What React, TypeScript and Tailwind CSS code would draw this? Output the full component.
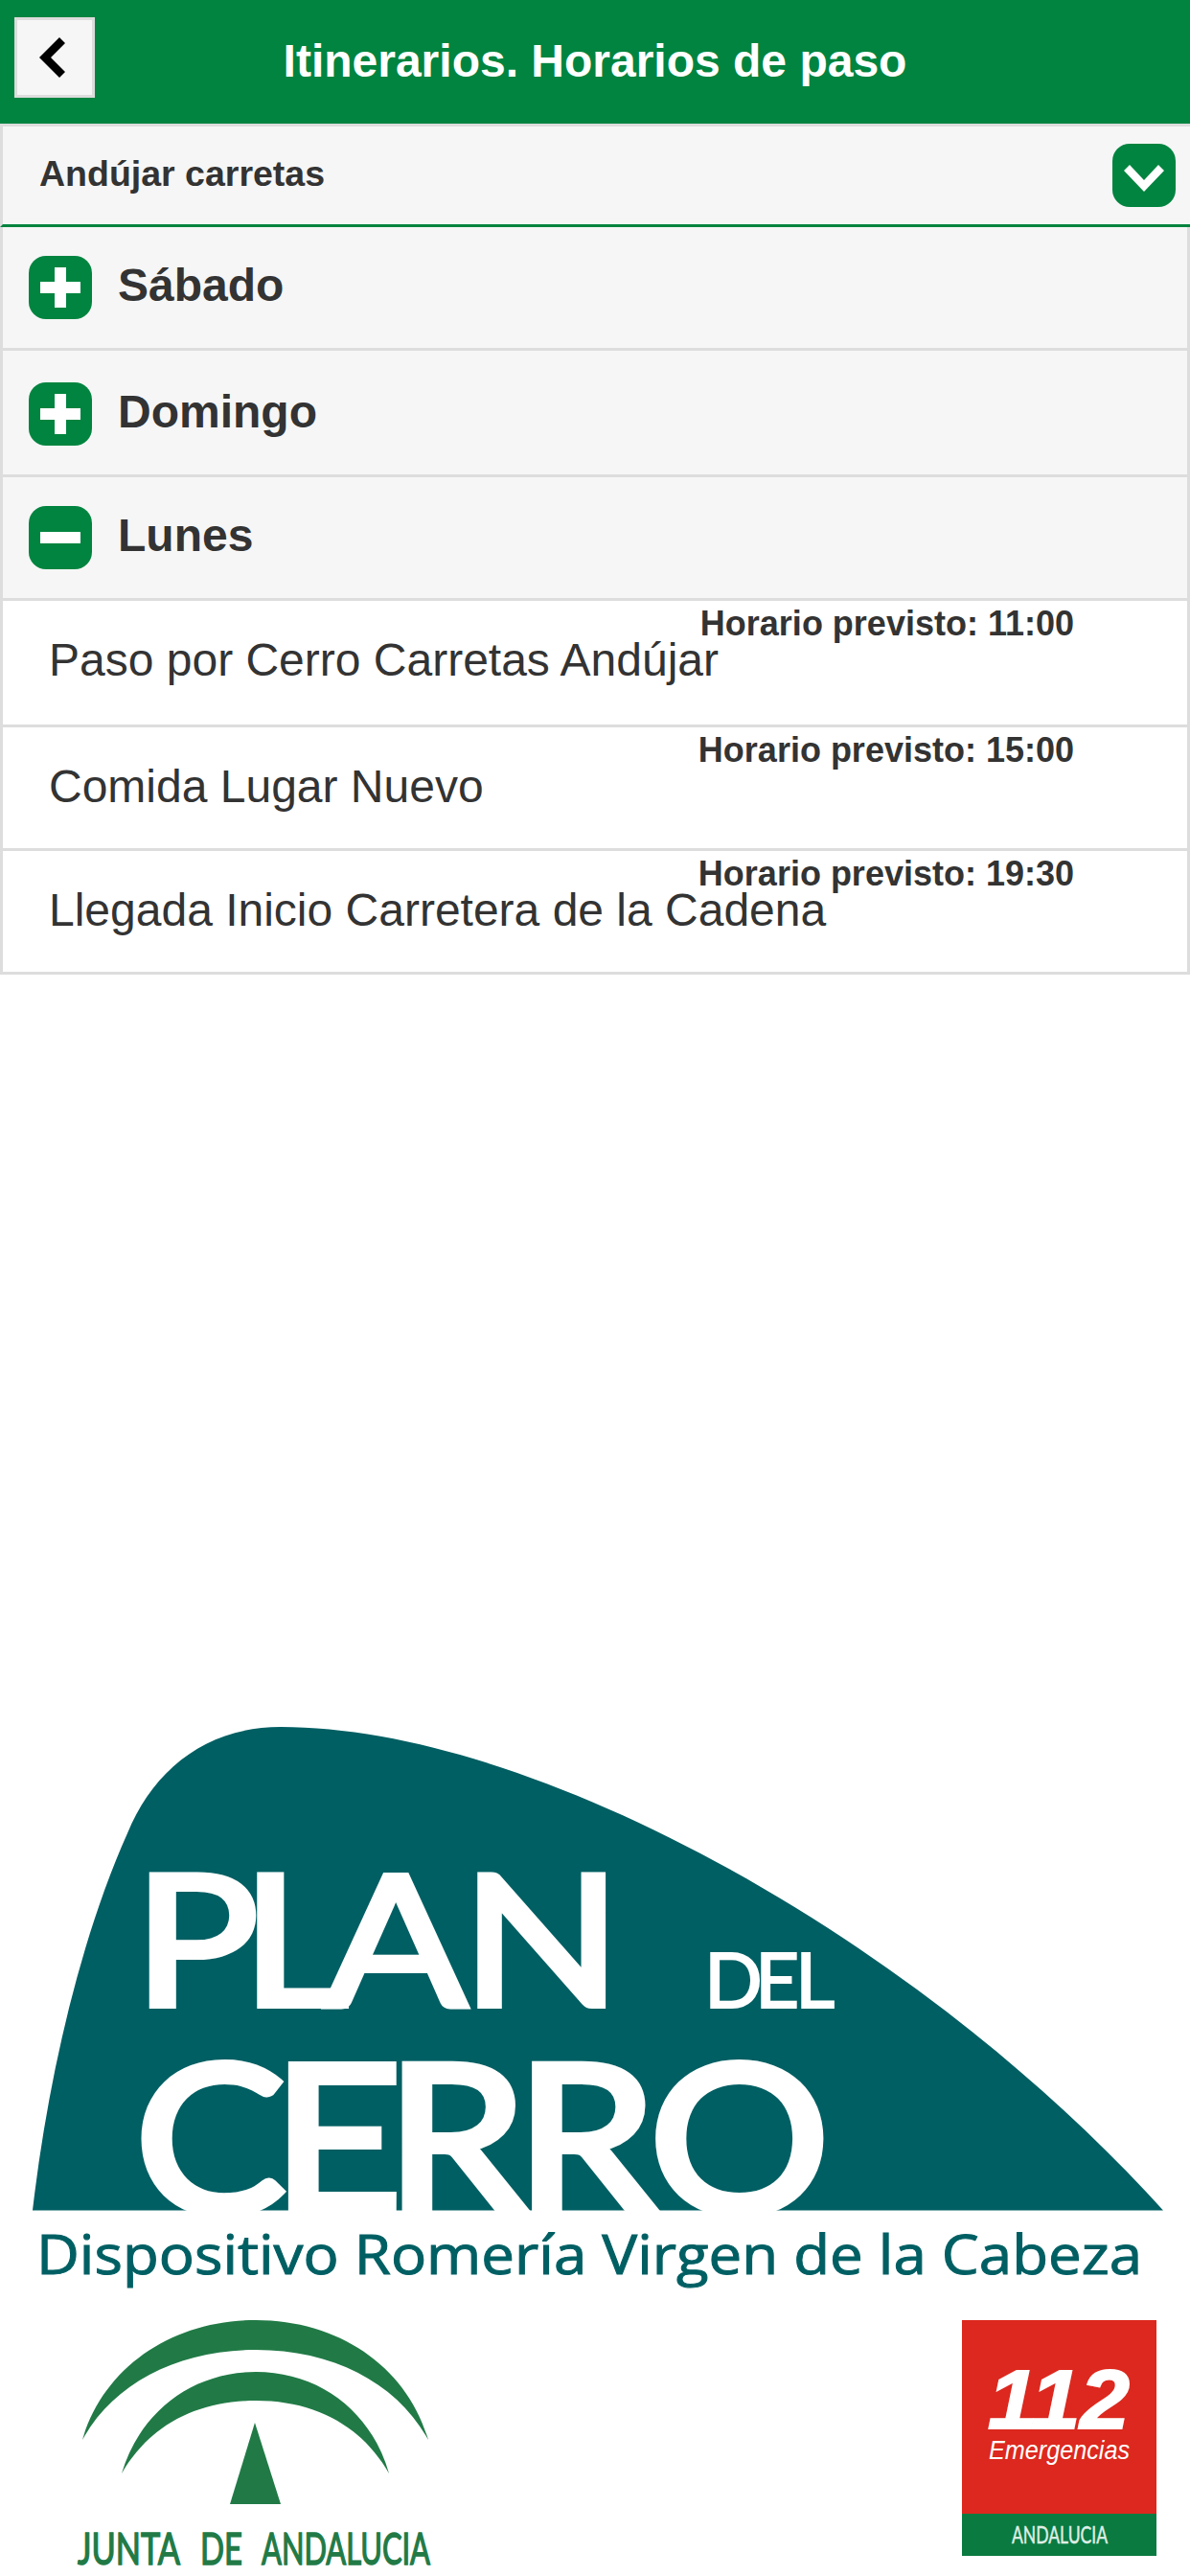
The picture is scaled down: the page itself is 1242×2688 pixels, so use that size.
import React from "react";

const shape =
  "M34 2306.5C50 2170 83 2025 133 1913C160 1847 215 1802 293 1802C560 1802 960 2025 1214 2306.5Z";

function IconBox({ kind }: { kind: "plus" | "minus" | "down" }) {
  return (
    <svg width="66" height="66" viewBox="0 0 66 66" className="block shrink-0">
      <rect width="66" height="66" rx="18" fill="#00843f" />
      {kind === "plus" && <path d="M27 12h12v15h15v12H39v15H27V39H12V27h15z" fill="#fff" />}
      {kind === "minus" && <rect x="12" y="27" width="42" height="12" fill="#fff" />}
      {kind === "down" && <polygon points="12,28 18,22 33,38 48,22 54,28 33,50" fill="#fff" />}
    </svg>
  );
}

function Group({ label, kind, pt }: { label: string; kind: "plus" | "minus"; pt: string }) {
  return (
    <div className={`flex items-center gap-[27px] border-x-[3px] border-b-[3px] border-[#dddddd] bg-[#f6f6f6] pl-[27px] pb-[30px] ${pt}`}>
      <IconBox kind={kind} />
      <span className="-mt-[5px] text-[48px] leading-[56px] font-bold text-[#333333]">{label}</span>
    </div>
  );
}

function Stop({ name, time, pb }: { name: string; time: string; pb: string }) {
  return (
    <div className={`flex flex-col border-x-[3px] border-b-[3px] border-[#dddddd] bg-white pl-[48px] pr-[118px] pt-[6px] ${pb}`}>
      <div className="text-right text-[36px] leading-[36px] font-bold text-[#333333]">Horario previsto: {time}</div>
      <div className="-mt-[4px] text-[48px] leading-[48px] text-[#333333]">{name}</div>
    </div>
  );
}

function PlanLogo() {
  return (
    <svg width="1242" height="610" viewBox="0 1790 1242 610" className="block">
      <path d={shape} fill="#005f63" />
      <g fill="#ffffff" stroke="#ffffff" fontFamily="Lato, sans-serif">
        <text y="2093" x="121 219 295 419" fontSize="190" strokeWidth="6" transform="scale(1.15 1)">PLAN</text>
        <text y="2095" x="735 788 830" fontSize="80" strokeWidth="2">DEL</text>
        <text y="2308" x="128 258 366 489 616" fontSize="214" strokeWidth="8" transform="scale(1.1 1)">CERRO</text>
      </g>
      <text x="38" y="2373" fontSize="56" fill="#005f63" stroke="#005f63" strokeWidth="1" fontFamily="'Open Sans', sans-serif" textLength="1154" lengthAdjust="spacingAndGlyphs">
        Dispositivo Romería Virgen de la Cabeza
      </text>
    </svg>
  );
}

function JuntaLogo() {
  return (
    <svg width="390" height="288" viewBox="70 2400 390 288" className="block">
      <path d="M86 2546C108 2470 180 2421 267 2421C354 2421 425 2470 447 2546C415 2487 348 2452 267 2452C186 2452 118 2487 86 2546Z" fill="#217a46" />
      <path d="M127 2581C146 2517 200 2475 267 2475C334 2475 388 2517 406 2581C378 2532 330 2505 267 2505C204 2505 155 2532 127 2581Z" fill="#217a46" />
      <polygon points="266,2528 293,2613 240,2613" fill="#217a46" />
      <g fontSize="46" fill="#217a46" stroke="#217a46" strokeWidth="1.5" fontFamily="Lato, sans-serif">
        <text x="81" y="2676" textLength="107" lengthAdjust="spacingAndGlyphs">JUNTA</text>
        <text x="209" y="2676" textLength="44" lengthAdjust="spacingAndGlyphs">DE</text>
        <text x="273" y="2676" textLength="176" lengthAdjust="spacingAndGlyphs">ANDALUCIA</text>
      </g>
    </svg>
  );
}

function Logo112() {
  return (
    <svg width="215" height="288" viewBox="1000 2400 215 288" className="block">
      <rect x="1004" y="2421" width="203" height="202" fill="#dc281e" />
      <rect x="1004" y="2623" width="203" height="44" fill="#0a7a40" />
      <g fontFamily="'Liberation Sans', sans-serif" fontStyle="italic" fill="#ffffff">
        <text x="1031" y="2534" fontSize="88" fontWeight="700" stroke="#ffffff" strokeWidth="2" textLength="148" lengthAdjust="spacingAndGlyphs">112</text>
        <text x="1032" y="2566" fontSize="27" textLength="147" lengthAdjust="spacingAndGlyphs">Emergencias</text>
      </g>
      <text x="1056" y="2654" fontSize="25" fill="#dfeee5" stroke="#dfeee5" strokeWidth="0.5" fontFamily="Lato, sans-serif" textLength="100" lengthAdjust="spacingAndGlyphs">ANDALUCIA</text>
    </svg>
  );
}

export default function App() {
  return (
    <div className="flex h-[2688px] w-[1242px] flex-col overflow-hidden bg-white font-['Liberation_Sans',Arial,sans-serif]">
      <header className="grid h-[129px] grid-cols-[1fr_auto_1fr] items-center bg-[#00843f] pl-[15px]">
        <button className="flex h-[84px] w-[84px] items-center justify-center border-[3px] border-[#dddddd] bg-[#f6f6f6] pr-[5px] -mt-[9px]">
          <svg width="27" height="42" viewBox="0 0 27 42" className="block">
            <polygon points="0,21 21,0 27,6 12,21 27,36 21,42" fill="#000000" />
          </svg>
        </button>
        <h1 className="-ml-[15px] text-[48px] leading-[56px] -mt-[2px] font-bold text-white">Itinerarios. Horarios de paso</h1>
        <span />
      </header>
      <div className="flex h-[108px] items-center justify-between border-t-[3px] border-b-[3px] border-l-[3px] border-t-[#dddddd] border-b-[#00843f] border-l-[#dddddd] bg-[#f6f6f6] pl-[38px] pr-[15px]">
        <span className="-mt-[4px] text-[37.5px] leading-[42px] font-bold text-[#333333]">Andújar carretas</span>
        <IconBox kind="down" />
      </div>
      <Group label="Sábado" kind="plus" pt="pt-[30px]" />
      <Group label="Domingo" kind="plus" pt="pt-[33px]" />
      <Group label="Lunes" kind="minus" pt="pt-[30px]" />
      <Stop name="Paso por Cerro Carretas Andújar" time="11:00" pb="pb-[43px]" />
      <Stop name="Comida Lugar Nuevo" time="15:00" pb="pb-[40px]" />
      <Stop name="Llegada Inicio Carretera de la Cadena" time="19:30" pb="pb-[40px]" />
      <div className="mt-auto flex flex-col">
        <PlanLogo />
        <div className="flex justify-between pl-[70px] pr-[27px]">
          <JuntaLogo />
          <Logo112 />
        </div>
      </div>
    </div>
  );
}
